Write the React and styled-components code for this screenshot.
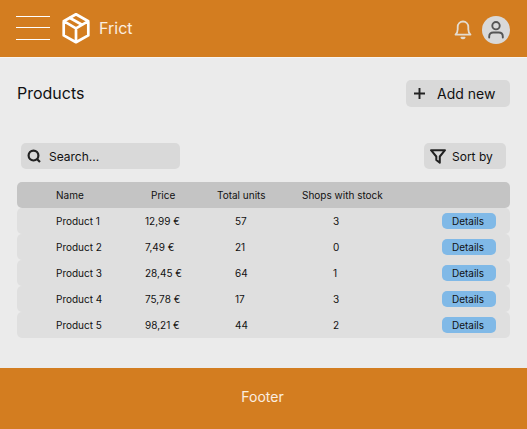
import React from "react";
import styled, { createGlobalStyle } from "styled-components";

const GlobalStyle = createGlobalStyle`
  *, *::before, *::after { box-sizing: border-box; }
  body { margin: 0; background: #ebebeb; font-family: Inter, sans-serif; color: #111; }
  button, input { font: inherit; color: inherit; border: 0; margin: 0; }
  svg { display: block; flex: none; }
`;

const Page = styled.div`
  display: flex;
  flex-direction: column;
  width: 527px;
  height: 429px;
  overflow: hidden;
`;

const Header = styled.header`
  display: flex;
  align-items: center;
  height: 58px;
  padding: 0 17px 0 16px;
  background: #d37d20;
  border-bottom: 1px solid #f8f4f0;
  flex: none;
`;

const MenuButton = styled.button`
  width: 34px;
  height: 26px;
  padding: 0;
  margin-bottom: 2px;
  background: none;
`;

const Logo = styled.div`
  display: flex;
  align-items: center;
  gap: 8px;
  margin-left: 11px;
  margin-bottom: 1px;
  color: #fff;
`;

const Brand = styled.span`
  font-size: 16px;
  line-height: 20px;
  color: #fbeee0;
`;

const HeaderActions = styled.div`
  display: flex;
  align-items: center;
  gap: 10px;
  margin-left: auto;
  padding-top: 2px;
`;

const Avatar = styled.div`
  width: 28px;
  height: 28px;
  border-radius: 50%;
  background: #d9d9d9;
`;

const Main = styled.main`
  flex: 1;
  padding: 22px 17px 0;
`;

const TitleRow = styled.div`
  display: flex;
  align-items: center;
  justify-content: space-between;
  height: 27px;
`;

const Title = styled.h1`
  margin: 0 0 1px;
  font-size: 16px;
  font-weight: 400;
  line-height: 20px;
`;

const ToolRow = styled.div`
  display: flex;
  justify-content: space-between;
  margin: 36px 4px 13px;
`;

const Button = styled.button`
  display: flex;
  align-items: center;
  width: ${(p) => p.$width}px;
  height: ${(p) => p.$height}px;
  gap: ${(p) => p.$gap}px;
  padding: 0 0 0 ${(p) => p.$inset}px;
  border-radius: 5px;
  background: #d9d9d9;
  font-size: ${(p) => p.$size}px;
  white-space: nowrap;
`;

const SearchBox = styled.label`
  display: flex;
  align-items: center;
  gap: 8px;
  width: 159px;
  height: 26px;
  padding-left: 6px;
  border-radius: 5px;
  background: #d9d9d9;
  font-size: 12px;
`;

const Row = styled.div`
  display: grid;
  grid-template-columns: 89px 90px 98px 109px 54px;
  align-items: center;
  height: 26px;
  padding-left: 39px;
  border-radius: 5px;
  background: ${(p) => (p.$head ? "#c4c4c4" : "#dfdfdf")};
  font-size: 10px;
  line-height: 14px;
`;

const Cell = styled.span`
  margin-left: ${(p) => p.$shift || 0}px;
  white-space: nowrap;
`;

const Details = styled.button`
  width: 54px;
  height: 16px;
  padding: 0 2px 0 0;
  border-radius: 5px;
  background: #80b9e7;
  font-size: 10px;
  line-height: 16px;
  text-align: center;
`;

const Footer = styled.footer`
  display: flex;
  align-items: center;
  justify-content: center;
  height: 61px;
  padding-right: 2px;
  padding-bottom: 4px;
  background: #d37d20;
  color: #fbeee0;
  font-size: 14px;
  flex: none;
`;

const products = [
  ["Product 1", "12,99 €", "57", "3"],
  ["Product 2", "7,49 €", "21", "0"],
  ["Product 3", "28,45 €", "64", "1"],
  ["Product 4", "75,78 €", "17", "3"],
  ["Product 5", "98,21 €", "44", "2"],
];

const MenuIcon = () => (
  <svg width="34" height="26" viewBox="0 0 34 26" stroke="#fff" strokeWidth="1">
    <path d="M0 1.5h34M0 12.5h34M0 24.5h34" />
  </svg>
);

const BoxIcon = () => (
  <svg width="30" height="32" viewBox="0 0 30 32" fill="none" stroke="currentColor" strokeWidth="2.7" strokeLinejoin="round" strokeLinecap="round">
    <path d="M15 2.300 27.300 9.200v14.200L15 30.200 2.700 23.400V9.200zM2.700 9.200 15 16.400 27.300 9.200M15 16.400V30" />
    <path d="M9 6l12 6.700" />
  </svg>
);

const BellIcon = () => (
  <svg width="18" height="20" viewBox="0 0 18 20" fill="none" stroke="#e4dcd0" strokeWidth="1.8" strokeLinejoin="round" strokeLinecap="round">
    <path d="M1.500 14.600h15c-1.700-1.500-2.200-2.900-2.200-5.300V7C14.300 3.800 12 1.500 9 1.500S3.700 3.800 3.700 7v2.300c0 2.400-.5 3.800-2.200 5.300z" />
    <path d="M7.400 17.600c.6 1.100 2.600 1.100 3.200 0z" />
  </svg>
);

const UserIcon = () => (
  <svg width="28" height="28" viewBox="0 0 28 28" fill="none" stroke="#555" strokeWidth="1.900" strokeLinecap="round">
    <circle cx="14" cy="9.700" r="3.700" />
    <path d="M7.200 21.500v-1c0-2.600 1.700-4 4-4h5.600c2.300 0 4 1.400 4 4v1" />
  </svg>
);

const PlusIcon = () => (
  <svg width="12" height="12" viewBox="0 0 12 12" stroke="#222" strokeWidth="1.900">
    <path d="M5.500 0v11M0 5.500h11" />
  </svg>
);

const SearchIcon = () => (
  <svg width="14" height="14" viewBox="0 0 14 14" fill="none" stroke="#222" strokeWidth="2.200">
    <circle cx="6.500" cy="6.600" r="4.900" />
    <path d="m10 10 3 3" />
  </svg>
);

const FilterIcon = () => (
  <svg width="16" height="15" viewBox="0 0 16 15" fill="none" stroke="#222" strokeWidth="2" strokeLinejoin="round">
    <path d="M1 1.200h14L9.800 7.500v6.300L6.300 11V7.500z" />
  </svg>
);

export default function App() {
  return (
    <Page>
      <GlobalStyle />
      <Header>
        <MenuButton aria-label="Menu"><MenuIcon /></MenuButton>
        <Logo>
          <BoxIcon />
          <Brand>Frict</Brand>
        </Logo>
        <HeaderActions>
          <BellIcon />
          <Avatar><UserIcon /></Avatar>
        </HeaderActions>
      </Header>
      <Main>
        <TitleRow>
          <Title>Products</Title>
          <Button $width={104} $height={27} $gap={11} $inset={8} $size={14}>
            <PlusIcon />Add new
          </Button>
        </TitleRow>
        <ToolRow>
          <SearchBox><SearchIcon />Search...</SearchBox>
          <Button $width={82} $height={26} $gap={6} $inset={6} $size={12}>
            <FilterIcon />Sort by
          </Button>
        </ToolRow>
        <Row $head>
          <Cell>Name</Cell>
          <Cell $shift={6}>Price</Cell>
          <Cell $shift={-18}>Total units</Cell>
          <Cell $shift={-31}>Shops with stock</Cell>
        </Row>
        {products.map(([name, price, units, shops]) => (
          <Row key={name}>
            <Cell>{name}</Cell>
            <Cell>{price}</Cell>
            <Cell>{units}</Cell>
            <Cell>{shops}</Cell>
            <Details>Details</Details>
          </Row>
        ))}
      </Main>
      <Footer>Footer</Footer>
    </Page>
  );
}
